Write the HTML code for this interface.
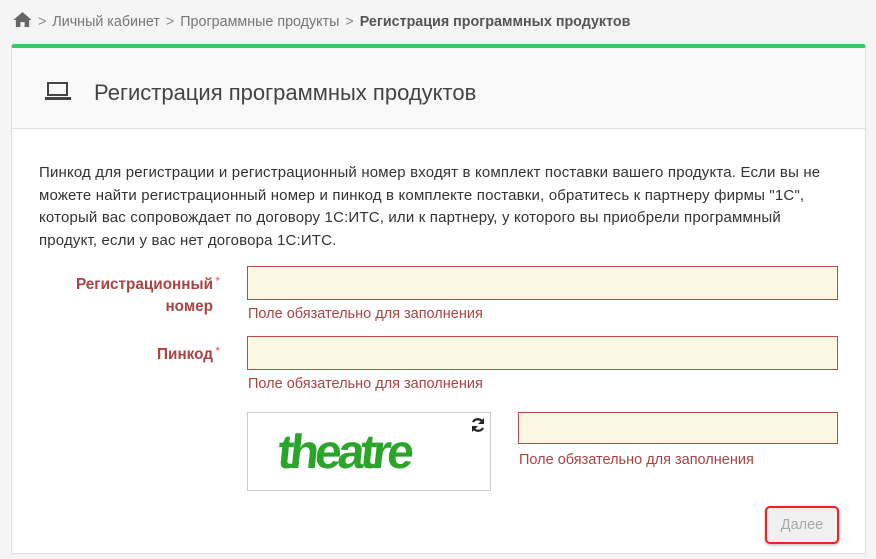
<!DOCTYPE html>
<html><head><meta charset="utf-8"><style>
*{box-sizing:border-box;margin:0;padding:0}
body{width:876px;height:559px;background:#f5f5f5;font-family:"Liberation Sans",sans-serif;position:relative;overflow:hidden;color:#333}
.bc{position:absolute;top:12px;left:13px;font-size:14.3px;color:#777;white-space:nowrap}
.bc b{color:#555}
.bc .s{margin:0 6px;color:#888}
.panel{position:absolute;left:11px;top:44px;width:855px;height:510px;background:#fff;border:1px solid #e2e2e2;border-top:4px solid #3cc864;border-radius:3px 3px 0 0}
.hd{height:81px;background:#f9f9f9;border-bottom:1px solid #e0e0e0;position:relative}
.hd h1{position:absolute;left:82px;top:32px;font-size:22px;font-weight:normal;color:#444}
.txt{position:absolute;left:27px;top:114px;white-space:nowrap;font-size:15px;letter-spacing:0.17px;line-height:22.5px;color:#333}
.lbl{position:absolute;right:652px;font-size:15.3px;font-weight:bold;color:#a94442;text-align:right;line-height:22px}
.lbl i{position:absolute;right:-7px;top:-4px;color:#e55;font-style:normal;font-weight:normal;font-size:12px}
.in{position:absolute;background:#fcf8e3;border:1px solid #b94a48;height:34px}
.err{position:absolute;font-size:14.5px;color:#a94442}
.cap{position:absolute;left:235px;top:364px;width:244px;height:79px;border:1px solid #ccc;background:#fff;overflow:hidden}
.btn{position:absolute;left:753px;top:458px;width:74px;height:38px;border:2px solid #e22;border-radius:5px;background:#f0f0f0;color:#aaa;font-size:14.5px;text-align:center;line-height:34px;box-shadow:0 1px 3px rgba(0,0,0,.3)}
</style></head><body>
<div class="bc"><svg width="19" height="15" viewBox="0 0 17 14" style="vertical-align:-1px"><path d="M8.5 0L0 7.5h2.3V14h4.2V9.5h4V14h4.2V7.5H17z" fill="#666"/></svg><span class="s">&gt;</span>Личный кабинет<span class="s">&gt;</span>Программные продукты<span class="s">&gt;</span><b>Регистрация программных продуктов</b></div>
<div class="panel">
<div class="hd"><svg width="26" height="18" viewBox="0 0 26 18" style="position:absolute;left:33px;top:34px"><rect x="3" y="1" width="19" height="12" fill="none" stroke="#444" stroke-width="2"/><rect x="0" y="15" width="26" height="3" fill="#444"/></svg><h1>Регистрация программных продуктов</h1></div>
<div class="txt">Пинкод для регистрации и регистрационный номер входят в комплект поставки вашего продукта. Если вы не<br>можете найти регистрационный номер и пинкод в комплекте поставки, обратитесь к партнеру фирмы "1С",<br>который вас сопровождает по договору 1С:ИТС, или к партнеру, у которого вы приобрели программный<br>продукт, если у вас нет договора 1С:ИТС.</div>
<div class="lbl" style="top:226px">Регистрационный<i>*</i><br>номер</div>
<div class="in" style="left:235px;top:218px;width:591px"></div>
<div class="err" style="left:236px;top:258px">Поле обязательно для заполнения</div>
<div class="lbl" style="top:296px">Пинкод<i>*</i></div>
<div class="in" style="left:235px;top:288px;width:591px"></div>
<div class="err" style="left:236px;top:328px">Поле обязательно для заполнения</div>
<div class="cap"><div style="position:absolute;left:30px;top:12px;font-size:48px;font-weight:bold;color:#2aa52a;letter-spacing:-4px;transform:skewX(-6deg)">theatre</div><svg width="16" height="16" viewBox="0 0 16 16" style="position:absolute;right:4px;top:4px"><path d="M13 6A5.5 5.5 0 0 0 3 5M3 10a5.5 5.5 0 0 0 10 1" fill="none" stroke="#222" stroke-width="2.2"/><path d="M14 1v6H8zM2 15V9h6z" fill="#222"/></svg></div>
<div class="in" style="left:506px;top:364px;width:320px;height:32px"></div>
<div class="err" style="left:507px;top:404px">Поле обязательно для заполнения</div>
<div class="btn">Далее</div>
</div>
</body></html>
